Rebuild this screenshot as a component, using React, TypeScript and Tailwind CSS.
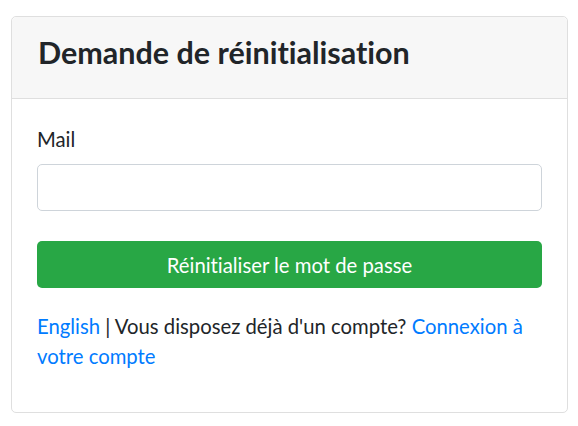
export default function App() {
  return (
    <div
      className="min-h-[426px] bg-white pt-4 pl-[11px] pr-[10px] text-[#212529] [font-variant-ligatures:none]"
      style={{ fontFamily: 'Lato, "Noto Sans", sans-serif' }}
    >
      <div className="w-[557px] rounded-[5px] border border-[#dfdfdf] bg-white">
        <div className="h-[82px] rounded-t-[5px] border-b border-[#dfdfdf] bg-[#f7f7f7] px-[26px] pt-[17px]">
          <h3 className="text-[30.5px] font-bold leading-[36px]">Demande de réinitialisation</h3>
        </div>
        <div className="px-[25px] pt-[25px] pb-[41px]">
          <label className="block text-[20.3px] leading-[30px]">Mail</label>
          <input
            type="email"
            className="mt-[10px] block h-[47px] w-full rounded-[5px] border border-[#ced4da] bg-white px-[15px] text-[20px] outline-none"
          />
          <button className="mt-[30px] block h-[47px] w-full rounded-[5px] bg-[#28a745] text-[20.3px] leading-[30px] text-white">
            Réinitialiser le mot de passe
          </button>
          <p className="mt-[23px] text-[20.3px] leading-[30px]">
            <a className="text-[#007bff]">English</a> | Vous disposez déjà d'un compte?{' '}
            <a className="text-[#007bff]">Connexion à votre compte</a>
          </p>
        </div>
      </div>
    </div>
  )
}
